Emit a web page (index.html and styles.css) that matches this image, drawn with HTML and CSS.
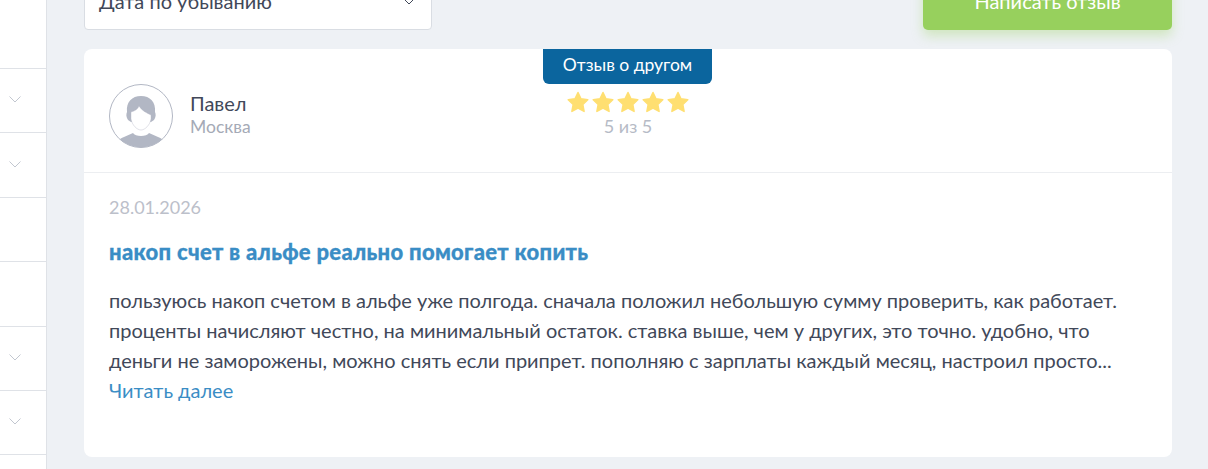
FILE: index.html
```html
<!DOCTYPE html>
<html lang="ru">
<head>
    <meta charset="UTF-8">
    <meta name="viewport" content="width=device-width, initial-scale=1.0">
    <title>Отзывы</title>
    <link rel="stylesheet" href="styles.css">
</head>
<body>
    <aside class="filters">
        <div class="filter-row filter-row-first"></div>
        <div class="filter-row">
            <svg class="chevron" viewBox="0 0 12 7"><path d="M.5.5 6 6 11.500.5"/></svg>
        </div>
        <div class="filter-row">
            <svg class="chevron" viewBox="0 0 12 7"><path d="M.5.5 6 6 11.500.5"/></svg>
        </div>
        <div class="filter-row"></div>
        <div class="filter-row"></div>
        <div class="filter-row">
            <svg class="chevron" viewBox="0 0 12 7"><path d="M.5.5 6 6 11.500.5"/></svg>
        </div>
        <div class="filter-row">
            <svg class="chevron" viewBox="0 0 12 7"><path d="M.5.5 6 6 11.500.5"/></svg>
        </div>
    </aside>

    <main class="content">
        <div class="toolbar">
            <div class="sort-select">
                <span>Дата по убыванию</span>
                <svg class="sort-arrow" viewBox="0 0 12 7"><path d="M.5.5 6 6 11.500.5"/></svg>
            </div>
            <button class="write-button">Написать отзыв</button>
        </div>

        <article class="review">
            <div class="review-tag">Отзыв о другом</div>
            <header class="review-head">
                <div class="author">
                    <svg class="avatar" viewBox="0 0 64 64">
                        <defs><clipPath id="avatar-clip"><circle cx="32" cy="32" r="31.500"/></clipPath></defs>
                        <g clip-path="url(#avatar-clip)">
                            <path class="avatar-fill" d="M4 64C6 58 10 55 15 53L24 49C26 53 38 53 40 49L49 53C54 55 58 58 60 64z"/>
                            <path class="avatar-fill" d="M19 36C17 33 17 30 18 28 17 18 23 12 32 12S47 18 46 28C47 30 47 33 45 36L42 38H22z"/>
                            <path class="avatar-face" d="M22 28C26 27 29 25 30 22 33 27 38 29 42 31V35C41 41 36 46 32 46S23 41 22 35z"/>
                        </g>
                        <circle class="avatar-ring" cx="32" cy="32" r="31.500"/>
                    </svg>
                    <div class="author-info">
                        <div class="author-name">Павел</div>
                        <div class="author-city">Москва</div>
                    </div>
                </div>
                <div class="rating">
                    <div class="stars">
                        <svg class="star" viewBox="0 0 24 24"><path d="M12 2.500l3 6.300 6.800.9-5 4.800 1.300 6.900-6.100-3.400-6.100 3.400 1.300-6.900-5-4.800 6.800-.9z"/></svg>
                        <svg class="star" viewBox="0 0 24 24"><path d="M12 2.500l3 6.300 6.800.9-5 4.800 1.300 6.900-6.100-3.400-6.100 3.400 1.300-6.900-5-4.800 6.800-.9z"/></svg>
                        <svg class="star" viewBox="0 0 24 24"><path d="M12 2.500l3 6.300 6.800.9-5 4.800 1.300 6.900-6.100-3.400-6.100 3.400 1.300-6.900-5-4.800 6.800-.9z"/></svg>
                        <svg class="star" viewBox="0 0 24 24"><path d="M12 2.500l3 6.300 6.800.9-5 4.800 1.300 6.900-6.100-3.400-6.100 3.400 1.300-6.900-5-4.800 6.800-.9z"/></svg>
                        <svg class="star" viewBox="0 0 24 24"><path d="M12 2.500l3 6.300 6.800.9-5 4.800 1.300 6.900-6.100-3.400-6.100 3.400 1.300-6.900-5-4.800 6.800-.9z"/></svg>
                    </div>
                    <div class="rating-text">5 из 5</div>
                </div>
            </header>
            <div class="review-body">
                <div class="review-date">28.01.2026</div>
                <h2 class="review-title">накоп счет в альфе реально помогает копить</h2>
                <p class="review-text">пользуюсь накоп счетом в альфе уже полгода. сначала положил небольшую сумму проверить, как работает. проценты начисляют честно, на минимальный остаток. ставка выше, чем у других, это точно. удобно, что деньги не заморожены, можно снять если припрет. пополняю с зарплаты каждый месяц, настроил просто...</p>
                <a class="read-more" href="#">Читать далее</a>
            </div>
        </article>
    </main>
</body>
</html>
```

FILE: styles.css
```css
html, body {
    height: 100%;
}

body {
    margin: 0;
    display: flex;
    overflow: hidden;
    font-family: 'Lato', 'Noto Sans', sans-serif;
    color: #414859;
    background-color: #eef1f5;
}

.filters {
    flex: 0 0 46px;
    background-color: #ffffff;
    border-right: 1px solid #dfe2e7;
}

.filter-row {
    height: 64.4px;
    display: flex;
    align-items: center;
    justify-content: flex-end;
    padding-right: 25px;
    padding-bottom: 2px;
    box-sizing: border-box;
    border-bottom: 1px solid #dfe2e7;
}

.filter-row-first {
    height: 69px;
}

.chevron {
    width: 12px;
    height: 7px;
    fill: none;
    stroke: #c2c7d0;
    stroke-width: 1;
}

.content {
    flex: 1;
    padding: 0 36px 0 37px;
}

.toolbar {
    display: flex;
    justify-content: space-between;
    align-items: flex-end;
    height: 30px;
    margin-bottom: 19px;
}

.sort-select {
    flex: none;
    width: 348px;
    height: 58px;
    padding: 0 16px 0 14px;
    box-sizing: border-box;
    display: flex;
    align-items: center;
    justify-content: space-between;
    font-size: 20px;
    background-color: #ffffff;
    border: 1px solid #d9dde3;
    border-radius: 4px;
}

.sort-arrow {
    width: 12px;
    height: 7px;
    fill: none;
    stroke: #414859;
    stroke-width: 1;
}

.write-button {
    flex: none;
    width: 249px;
    height: 58px;
    padding: 0;
    border: none;
    border-radius: 5px;
    font-family: inherit;
    font-size: 20px;
    color: #ffffff;
    background-color: #97d05d;
    box-shadow: 0 6px 12px rgba(151, 208, 93, 0.35);
}

.review {
    position: relative;
    height: 408px;
    background-color: #ffffff;
    border-radius: 8px;
}

.review-tag {
    position: absolute;
    top: 0;
    left: 459px;
    width: 169px;
    height: 35px;
    line-height: 32px;
    text-align: center;
    font-size: 17.5px;
    color: #ffffff;
    background-color: #0b659e;
    border-radius: 0 0 6px 6px;
}

.review-head {
    position: relative;
    height: 124px;
    box-sizing: border-box;
    padding: 35px 25px 0;
    border-bottom: 1px solid #eceef1;
}

.author {
    display: flex;
    align-items: flex-start;
    gap: 17px;
}

.avatar {
    width: 64px;
    height: 64px;
}

.avatar-fill {
    fill: #b2b7c4;
}

.avatar-face {
    fill: #ffffff;
    stroke: #b2b7c4;
    stroke-width: 0.4;
}

.avatar-ring {
    fill: none;
    stroke: #b2b7c4;
    stroke-width: 1;
}

.author-info {
    padding-top: 7px;
}

.author-name {
    font-size: 20px;
    line-height: 24px;
}

.author-city {
    font-size: 17.5px;
    line-height: 24px;
    color: #a5aab6;
}

.rating {
    position: absolute;
    top: 41px;
    left: 459px;
    width: 170px;
    text-align: center;
}

.stars {
    display: flex;
    justify-content: center;
    gap: 1px;
    height: 24px;
}

.star {
    width: 24px;
    height: 24px;
    fill: #ffdf71;
    stroke: #ffdf71;
    stroke-width: 1.500;
    stroke-linejoin: round;
}

.rating-text {
    font-size: 18px;
    line-height: 22px;
    margin-top: 1px;
    color: #b6bbc6;
}

.review-body {
    padding: 23px 25px 0;
}

.review-date {
    font-size: 18px;
    line-height: 22px;
    color: #bcc0ca;
}

.review-title {
    margin: 22px 0 0;
    font-size: 22px;
    line-height: 24px;
    font-weight: 900;
    letter-spacing: 0.3px;
    -webkit-text-stroke: 0.3px #3a8dc5;
    color: #3a8dc5;
}

.review-text {
    margin: 21px 0 0;
    font-size: 20px;
    line-height: 30px;
}

.read-more {
    display: block;
    font-size: 20px;
    line-height: 30px;
    color: #3a8dc5;
    text-decoration: none;
}
```
